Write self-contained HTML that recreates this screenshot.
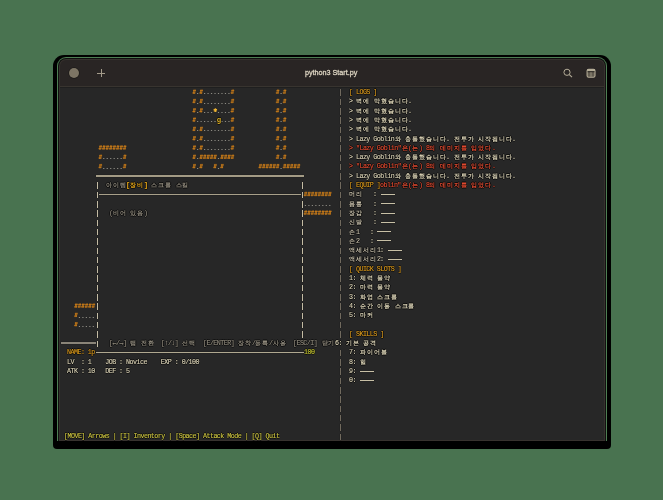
<!DOCTYPE html>
<html><head><meta charset="utf-8">
<style>
html,body{margin:0;padding:0;}
body{width:663px;height:500px;overflow:hidden;position:relative;background:#497350;font-family:"Liberation Mono",monospace;-webkit-font-smoothing:antialiased;}
#term{position:absolute;left:0;top:0;width:663px;height:500px;will-change:transform;}
#term span{text-shadow:0.8px 0 0.6px rgba(0,0,0,.7),-0.8px 0 0.6px rgba(0,0,0,.7),0 0.8px 0.6px rgba(0,0,0,.7),0 -0.8px 0.6px rgba(0,0,0,.7);}
.a{position:absolute;}
.t{position:absolute;white-space:pre;-webkit-text-stroke:0.15px currentColor;font-size:7.6px;line-height:9.3px;letter-spacing:-0.6089px;transform-origin:0 0;transform:scaleX(0.8800);}
.k{position:absolute;white-space:pre;font-weight:bold;font-size:6.4px;line-height:9.3px;width:6.954px;text-align:center;}
.l{position:absolute;box-shadow:0 0 1px rgba(0,0,0,.85);}
.g{position:absolute;white-space:pre;width:10px;text-align:center;line-height:12px;}
</style></head><body>
<div class="a" style="left:53px;top:55px;width:558px;height:394px;background:#000;border-radius:11px 11px 4px 4px;"></div>
<div class="a" style="left:57px;top:57px;width:550px;height:384px;background:#4e7e53;border-radius:9px 9px 0 0;"></div>
<div class="a" style="left:58px;top:58px;width:548px;height:383px;background:#101010;border-radius:8px 8px 0 0;"></div>
<div class="a" style="left:59px;top:59px;width:546px;height:382px;background:#37322e;border-radius:7px 7px 0 0;"></div>
<div class="a" style="left:60px;top:60px;width:544px;height:26px;background:#292524;border-radius:6px 6px 0 0;"></div>
<div class="a" style="left:60px;top:86px;width:544px;height:1px;background:#38342f;"></div>
<div class="a" style="left:60px;top:87px;width:544px;height:1px;background:#1f1f1f;"></div>
<div class="a" style="left:60px;top:88px;width:544px;height:352px;background:#272727;"></div>
<div class="a" style="left:68.8px;top:68px;width:10px;height:10px;border-radius:50%;background:#7d7565;box-shadow:0 0 0 0.7px #1c1a18;"></div>
<div class="a" style="left:97px;top:72.8px;width:8.4px;height:1px;background:#a39b8a;"></div>
<div class="a" style="left:100.7px;top:69px;width:1px;height:8.4px;background:#a39b8a;"></div>
<div class="a" style="left:0;top:64px;width:663px;text-align:center;font-family:'Liberation Sans',sans-serif;font-size:8px;line-height:18px;color:#ddd5c2;will-change:transform;-webkit-text-stroke:0.3px currentColor;"><span style="display:inline-block;transform:scaleX(0.9);">python3 Start.py</span></div>
<svg class="a" style="left:560px;top:65px" width="16" height="16" viewBox="0 0 16 16">
<circle cx="7" cy="7.3" r="3.1" fill="none" stroke="#b4ac98" stroke-width="1.0"/>
<line x1="9.3" y1="9.6" x2="12" y2="12.2" stroke="#b4ac98" stroke-width="1.1"/>
</svg>
<svg class="a" style="left:584px;top:66px" width="14" height="14" viewBox="0 0 14 14">
<rect x="3.1" y="3.3" width="7.9" height="8.0" rx="1.6" fill="#625c50" stroke="#b4ac96" stroke-width="1.1"/>
<rect x="3.0" y="3.0" width="8.1" height="2.4" rx="1" fill="#b4ac96"/>
<rect x="3.6" y="5.3" width="6.9" height="0.9" fill="#151312"/>
<rect x="6.55" y="6.2" width="0.9" height="4.6" fill="#9c947e"/>
</svg>
<div id="term">
<svg class="a" style="left:0;top:0" width="663" height="500"><path d="M193.03 90.60H196.00M192.33 92.90H195.30M193.33 93.90L194.03 89.50M194.53 93.90L195.23 89.50M199.98 90.60H202.96M199.28 92.90H202.26M200.28 93.90L200.98 89.50M201.48 93.90L202.18 89.50M231.27 90.60H234.25M230.57 92.90H233.55M231.57 93.90L232.27 89.50M232.77 93.90L233.47 89.50M193.03 99.90H196.00M192.33 102.20H195.30M193.33 103.20L194.03 98.80M194.53 103.20L195.23 98.80M199.98 99.90H202.96M199.28 102.20H202.26M200.28 103.20L200.98 98.80M201.48 103.20L202.18 98.80M231.27 99.90H234.25M230.57 102.20H233.55M231.57 103.20L232.27 98.80M232.77 103.20L233.47 98.80M193.03 109.20H196.00M192.33 111.50H195.30M193.33 112.50L194.03 108.10M194.53 112.50L195.23 108.10M199.98 109.20H202.96M199.28 111.50H202.26M200.28 112.50L200.98 108.10M201.48 112.50L202.18 108.10M231.27 109.20H234.25M230.57 111.50H233.55M231.57 112.50L232.27 108.10M232.77 112.50L233.47 108.10M193.03 118.50H196.00M192.33 120.80H195.30M193.33 121.80L194.03 117.40M194.53 121.80L195.23 117.40M231.27 118.50H234.25M230.57 120.80H233.55M231.57 121.80L232.27 117.40M232.77 121.80L233.47 117.40M193.03 127.80H196.00M192.33 130.10H195.30M193.33 131.10L194.03 126.70M194.53 131.10L195.23 126.70M199.98 127.80H202.96M199.28 130.10H202.26M200.28 131.10L200.98 126.70M201.48 131.10L202.18 126.70M231.27 127.80H234.25M230.57 130.10H233.55M231.57 131.10L232.27 126.70M232.77 131.10L233.47 126.70M193.03 137.10H196.00M192.33 139.40H195.30M193.33 140.40L194.03 136.00M194.53 140.40L195.23 136.00M199.98 137.10H202.96M199.28 139.40H202.26M200.28 140.40L200.98 136.00M201.48 140.40L202.18 136.00M231.27 137.10H234.25M230.57 139.40H233.55M231.57 140.40L232.27 136.00M232.77 140.40L233.47 136.00M193.03 146.40H196.00M192.33 148.70H195.30M193.33 149.70L194.03 145.30M194.53 149.70L195.23 145.30M199.98 146.40H202.96M199.28 148.70H202.26M200.28 149.70L200.98 145.30M201.48 149.70L202.18 145.30M231.27 146.40H234.25M230.57 148.70H233.55M231.57 149.70L232.27 145.30M232.77 149.70L233.47 145.30M193.03 155.70H196.00M192.33 158.00H195.30M193.33 159.00L194.03 154.60M194.53 159.00L195.23 154.60M199.98 155.70H202.96M199.28 158.00H202.26M200.28 159.00L200.98 154.60M201.48 159.00L202.18 154.60M203.46 155.70H206.43M202.76 158.00H205.73M203.76 159.00L204.46 154.60M204.96 159.00L205.66 154.60M206.93 155.70H209.91M206.23 158.00H209.21M207.23 159.00L207.93 154.60M208.43 159.00L209.13 154.60M210.41 155.70H213.39M209.71 158.00H212.69M210.71 159.00L211.41 154.60M211.91 159.00L212.61 154.60M213.89 155.70H216.87M213.19 158.00H216.17M214.19 159.00L214.89 154.60M215.39 159.00L216.09 154.60M220.84 155.70H223.82M220.14 158.00H223.12M221.14 159.00L221.84 154.60M222.34 159.00L223.04 154.60M224.32 155.70H227.30M223.62 158.00H226.60M224.62 159.00L225.32 154.60M225.82 159.00L226.52 154.60M227.80 155.70H230.77M227.10 158.00H230.07M228.10 159.00L228.80 154.60M229.30 159.00L230.00 154.60M231.27 155.70H234.25M230.57 158.00H233.55M231.57 159.00L232.27 154.60M232.77 159.00L233.47 154.60M193.03 165.00H196.00M192.33 167.30H195.30M193.33 168.30L194.03 163.90M194.53 168.30L195.23 163.90M199.98 165.00H202.96M199.28 167.30H202.26M200.28 168.30L200.98 163.90M201.48 168.30L202.18 163.90M213.89 165.00H216.87M213.19 167.30H216.17M214.19 168.30L214.89 163.90M215.39 168.30L216.09 163.90M220.84 165.00H223.82M220.14 167.30H223.12M221.14 168.30L221.84 163.90M222.34 168.30L223.04 163.90M276.47 90.60H279.45M275.77 92.90H278.75M276.77 93.90L277.47 89.50M277.97 93.90L278.67 89.50M283.43 90.60H286.40M282.73 92.90H285.70M283.73 93.90L284.43 89.50M284.93 93.90L285.63 89.50M276.47 99.90H279.45M275.77 102.20H278.75M276.77 103.20L277.47 98.80M277.97 103.20L278.67 98.80M283.43 99.90H286.40M282.73 102.20H285.70M283.73 103.20L284.43 98.80M284.93 103.20L285.63 98.80M276.47 109.20H279.45M275.77 111.50H278.75M276.77 112.50L277.47 108.10M277.97 112.50L278.67 108.10M283.43 109.20H286.40M282.73 111.50H285.70M283.73 112.50L284.43 108.10M284.93 112.50L285.63 108.10M276.47 118.50H279.45M275.77 120.80H278.75M276.77 121.80L277.47 117.40M277.97 121.80L278.67 117.40M283.43 118.50H286.40M282.73 120.80H285.70M283.73 121.80L284.43 117.40M284.93 121.80L285.63 117.40M276.47 127.80H279.45M275.77 130.10H278.75M276.77 131.10L277.47 126.70M277.97 131.10L278.67 126.70M283.43 127.80H286.40M282.73 130.10H285.70M283.73 131.10L284.43 126.70M284.93 131.10L285.63 126.70M276.47 137.10H279.45M275.77 139.40H278.75M276.77 140.40L277.47 136.00M277.97 140.40L278.67 136.00M283.43 137.10H286.40M282.73 139.40H285.70M283.73 140.40L284.43 136.00M284.93 140.40L285.63 136.00M276.47 146.40H279.45M275.77 148.70H278.75M276.77 149.70L277.47 145.30M277.97 149.70L278.67 145.30M283.43 146.40H286.40M282.73 148.70H285.70M283.73 149.70L284.43 145.30M284.93 149.70L285.63 145.30M276.47 155.70H279.45M275.77 158.00H278.75M276.77 159.00L277.47 154.60M277.97 159.00L278.67 154.60M283.43 155.70H286.40M282.73 158.00H285.70M283.73 159.00L284.43 154.60M284.93 159.00L285.63 154.60M259.09 165.00H262.07M258.39 167.30H261.37M259.39 168.30L260.09 163.90M260.59 168.30L261.29 163.90M262.57 165.00H265.54M261.87 167.30H264.84M262.87 168.30L263.57 163.90M264.07 168.30L264.77 163.90M266.04 165.00H269.02M265.34 167.30H268.32M266.34 168.30L267.04 163.90M267.54 168.30L268.24 163.90M269.52 165.00H272.50M268.82 167.30H271.80M269.82 168.30L270.52 163.90M271.02 168.30L271.72 163.90M273.00 165.00H275.97M272.30 167.30H275.27M273.30 168.30L274.00 163.90M274.50 168.30L275.20 163.90M276.47 165.00H279.45M275.77 167.30H278.75M276.77 168.30L277.47 163.90M277.97 168.30L278.67 163.90M283.43 165.00H286.40M282.73 167.30H285.70M283.73 168.30L284.43 163.90M284.93 168.30L285.63 163.90M286.91 165.00H289.88M286.20 167.30H289.18M287.20 168.30L287.91 163.90M288.41 168.30L289.11 163.90M290.38 165.00H293.36M289.68 167.30H292.66M290.68 168.30L291.38 163.90M291.88 168.30L292.58 163.90M293.86 165.00H296.84M293.16 167.30H296.14M294.16 168.30L294.86 163.90M295.36 168.30L296.06 163.90M297.34 165.00H300.31M296.64 167.30H299.61M297.64 168.30L298.34 163.90M298.84 168.30L299.54 163.90M99.15 146.40H102.12M98.45 148.70H101.42M99.45 149.70L100.15 145.30M100.65 149.70L101.35 145.30M102.62 146.40H105.60M101.92 148.70H104.90M102.92 149.70L103.62 145.30M104.12 149.70L104.82 145.30M106.10 146.40H109.08M105.40 148.70H108.38M106.40 149.70L107.10 145.30M107.60 149.70L108.30 145.30M109.58 146.40H112.55M108.88 148.70H111.86M109.88 149.70L110.58 145.30M111.08 149.70L111.78 145.30M113.05 146.40H116.03M112.36 148.70H115.33M113.36 149.70L114.05 145.30M114.55 149.70L115.25 145.30M116.53 146.40H119.51M115.83 148.70H118.81M116.83 149.70L117.53 145.30M118.03 149.70L118.73 145.30M120.01 146.40H122.99M119.31 148.70H122.29M120.31 149.70L121.01 145.30M121.51 149.70L122.21 145.30M123.49 146.40H126.46M122.79 148.70H125.76M123.79 149.70L124.49 145.30M124.99 149.70L125.69 145.30M99.15 155.70H102.12M98.45 158.00H101.42M99.45 159.00L100.15 154.60M100.65 159.00L101.35 154.60M123.49 155.70H126.46M122.79 158.00H125.76M123.79 159.00L124.49 154.60M124.99 159.00L125.69 154.60M99.15 165.00H102.12M98.45 167.30H101.42M99.45 168.30L100.15 163.90M100.65 168.30L101.35 163.90M123.49 165.00H126.46M122.79 167.30H125.76M123.79 168.30L124.49 163.90M124.99 168.30L125.69 163.90M304.29 192.90H307.27M303.59 195.20H306.57M304.59 196.20L305.29 191.80M305.79 196.20L306.49 191.80M307.77 192.90H310.74M307.07 195.20H310.04M308.07 196.20L308.77 191.80M309.27 196.20L309.97 191.80M311.24 192.90H314.22M310.54 195.20H313.52M311.54 196.20L312.24 191.80M312.74 196.20L313.44 191.80M314.72 192.90H317.70M314.02 195.20H317.00M315.02 196.20L315.72 191.80M316.22 196.20L316.92 191.80M318.20 192.90H321.18M317.50 195.20H320.47M318.50 196.20L319.20 191.80M319.70 196.20L320.40 191.80M321.68 192.90H324.65M320.97 195.20H323.95M321.97 196.20L322.68 191.80M323.18 196.20L323.88 191.80M325.15 192.90H328.13M324.45 195.20H327.43M325.45 196.20L326.15 191.80M326.65 196.20L327.35 191.80M328.63 192.90H331.61M327.93 195.20H330.91M328.93 196.20L329.63 191.80M330.13 196.20L330.83 191.80M304.29 211.50H307.27M303.59 213.80H306.57M304.59 214.80L305.29 210.40M305.79 214.80L306.49 210.40M307.77 211.50H310.74M307.07 213.80H310.04M308.07 214.80L308.77 210.40M309.27 214.80L309.97 210.40M311.24 211.50H314.22M310.54 213.80H313.52M311.54 214.80L312.24 210.40M312.74 214.80L313.44 210.40M314.72 211.50H317.70M314.02 213.80H317.00M315.02 214.80L315.72 210.40M316.22 214.80L316.92 210.40M318.20 211.50H321.18M317.50 213.80H320.47M318.50 214.80L319.20 210.40M319.70 214.80L320.40 210.40M321.68 211.50H324.65M320.97 213.80H323.95M321.97 214.80L322.68 210.40M323.18 214.80L323.88 210.40M325.15 211.50H328.13M324.45 213.80H327.43M325.45 214.80L326.15 210.40M326.65 214.80L327.35 210.40M328.63 211.50H331.61M327.93 213.80H330.91M328.93 214.80L329.63 210.40M330.13 214.80L330.83 210.40M74.81 304.50H77.78M74.11 306.80H77.09M75.11 307.80L75.81 303.40M76.31 307.80L77.01 303.40M78.28 304.50H81.26M77.59 306.80H80.56M78.59 307.80L79.28 303.40M79.78 307.80L80.48 303.40M81.76 304.50H84.74M81.06 306.80H84.04M82.06 307.80L82.76 303.40M83.26 307.80L83.96 303.40M85.24 304.50H88.22M84.54 306.80H87.52M85.54 307.80L86.24 303.40M86.74 307.80L87.44 303.40M88.72 304.50H91.69M88.02 306.80H90.99M89.02 307.80L89.72 303.40M90.22 307.80L90.92 303.40M92.19 304.50H95.17M91.49 306.80H94.47M92.49 307.80L93.19 303.40M93.69 307.80L94.39 303.40M74.81 313.80H77.78M74.11 316.10H77.09M75.11 317.10L75.81 312.70M76.31 317.10L77.01 312.70M74.81 323.10H77.78M74.11 325.40H77.09M75.11 326.40L75.81 322.00M76.31 326.40L77.01 322.00" stroke="#cc7c18" stroke-width="0.8" fill="none"/><path d="M197.04 93h1.2v1.1h-1.2zM204.00 93h1.2v1.1h-1.2zM207.47 93h1.2v1.1h-1.2zM210.95 93h1.2v1.1h-1.2zM214.43 93h1.2v1.1h-1.2zM217.90 93h1.2v1.1h-1.2zM221.38 93h1.2v1.1h-1.2zM224.86 93h1.2v1.1h-1.2zM228.33 93h1.2v1.1h-1.2zM197.04 103h1.2v1.1h-1.2zM204.00 103h1.2v1.1h-1.2zM207.47 103h1.2v1.1h-1.2zM210.95 103h1.2v1.1h-1.2zM214.43 103h1.2v1.1h-1.2zM217.90 103h1.2v1.1h-1.2zM221.38 103h1.2v1.1h-1.2zM224.86 103h1.2v1.1h-1.2zM228.33 103h1.2v1.1h-1.2zM197.04 112h1.2v1.1h-1.2zM204.00 112h1.2v1.1h-1.2zM207.47 112h1.2v1.1h-1.2zM210.95 112h1.2v1.1h-1.2zM217.90 112h1.2v1.1h-1.2zM221.38 112h1.2v1.1h-1.2zM224.86 112h1.2v1.1h-1.2zM228.33 112h1.2v1.1h-1.2zM197.04 121h1.2v1.1h-1.2zM200.52 121h1.2v1.1h-1.2zM204.00 121h1.2v1.1h-1.2zM207.47 121h1.2v1.1h-1.2zM210.95 121h1.2v1.1h-1.2zM214.43 121h1.2v1.1h-1.2zM221.38 121h1.2v1.1h-1.2zM224.86 121h1.2v1.1h-1.2zM228.33 121h1.2v1.1h-1.2zM197.04 130h1.2v1.1h-1.2zM204.00 130h1.2v1.1h-1.2zM207.47 130h1.2v1.1h-1.2zM210.95 130h1.2v1.1h-1.2zM214.43 130h1.2v1.1h-1.2zM217.90 130h1.2v1.1h-1.2zM221.38 130h1.2v1.1h-1.2zM224.86 130h1.2v1.1h-1.2zM228.33 130h1.2v1.1h-1.2zM197.04 140h1.2v1.1h-1.2zM204.00 140h1.2v1.1h-1.2zM207.47 140h1.2v1.1h-1.2zM210.95 140h1.2v1.1h-1.2zM214.43 140h1.2v1.1h-1.2zM217.90 140h1.2v1.1h-1.2zM221.38 140h1.2v1.1h-1.2zM224.86 140h1.2v1.1h-1.2zM228.33 140h1.2v1.1h-1.2zM197.04 149h1.2v1.1h-1.2zM204.00 149h1.2v1.1h-1.2zM207.47 149h1.2v1.1h-1.2zM210.95 149h1.2v1.1h-1.2zM214.43 149h1.2v1.1h-1.2zM217.90 149h1.2v1.1h-1.2zM221.38 149h1.2v1.1h-1.2zM224.86 149h1.2v1.1h-1.2zM228.33 149h1.2v1.1h-1.2zM197.04 158h1.2v1.1h-1.2zM217.90 158h1.2v1.1h-1.2zM197.04 168h1.2v1.1h-1.2zM217.90 168h1.2v1.1h-1.2zM280.49 93h1.2v1.1h-1.2zM280.49 103h1.2v1.1h-1.2zM280.49 112h1.2v1.1h-1.2zM280.49 121h1.2v1.1h-1.2zM280.49 130h1.2v1.1h-1.2zM280.49 140h1.2v1.1h-1.2zM280.49 149h1.2v1.1h-1.2zM280.49 158h1.2v1.1h-1.2zM280.49 168h1.2v1.1h-1.2zM103.16 158h1.2v1.1h-1.2zM106.64 158h1.2v1.1h-1.2zM110.12 158h1.2v1.1h-1.2zM113.59 158h1.2v1.1h-1.2zM117.07 158h1.2v1.1h-1.2zM120.55 158h1.2v1.1h-1.2zM103.16 168h1.2v1.1h-1.2zM106.64 168h1.2v1.1h-1.2zM110.12 168h1.2v1.1h-1.2zM113.59 168h1.2v1.1h-1.2zM117.07 168h1.2v1.1h-1.2zM120.55 168h1.2v1.1h-1.2zM304.83 205h1.2v1.1h-1.2zM308.31 205h1.2v1.1h-1.2zM311.78 205h1.2v1.1h-1.2zM315.26 205h1.2v1.1h-1.2zM318.74 205h1.2v1.1h-1.2zM322.21 205h1.2v1.1h-1.2zM325.69 205h1.2v1.1h-1.2zM329.17 205h1.2v1.1h-1.2zM78.82 317h1.2v1.1h-1.2zM82.30 317h1.2v1.1h-1.2zM85.78 317h1.2v1.1h-1.2zM89.25 317h1.2v1.1h-1.2zM92.73 317h1.2v1.1h-1.2zM78.82 326h1.2v1.1h-1.2zM82.30 326h1.2v1.1h-1.2zM85.78 326h1.2v1.1h-1.2zM89.25 326h1.2v1.1h-1.2zM92.73 326h1.2v1.1h-1.2z" fill="#8c8a82"/><path d="M215.33 108.20L215.33 112.00M213.68 109.15L216.97 111.05M216.97 109.15L213.68 111.05" stroke="#f2b632" stroke-width="1.1" fill="none"/></svg>
<span class="g" style="left:213.80px;top:114.20px;color:#e8b828;font-size:8.0px;font-weight:bold;transform:scaleX(0.900);">g</span>
<div class="l" style="left:96px;top:175px;width:208px;height:1.8px;background:#a39b85"></div>
<div class="l" style="left:96.76px;top:182.40px;width:1.3px;height:6.6px;background:#c4bca4"></div>
<div class="l" style="left:96.76px;top:191.70px;width:1.3px;height:6.6px;background:#c4bca4"></div>
<div class="l" style="left:96.76px;top:201.00px;width:1.3px;height:6.6px;background:#c4bca4"></div>
<div class="l" style="left:96.76px;top:210.30px;width:1.3px;height:6.6px;background:#c4bca4"></div>
<div class="l" style="left:96.76px;top:219.60px;width:1.3px;height:6.6px;background:#c4bca4"></div>
<div class="l" style="left:96.76px;top:228.90px;width:1.3px;height:6.6px;background:#c4bca4"></div>
<div class="l" style="left:96.76px;top:238.20px;width:1.3px;height:6.6px;background:#c4bca4"></div>
<div class="l" style="left:96.76px;top:247.50px;width:1.3px;height:6.6px;background:#c4bca4"></div>
<div class="l" style="left:96.76px;top:256.80px;width:1.3px;height:6.6px;background:#c4bca4"></div>
<div class="l" style="left:96.76px;top:266.10px;width:1.3px;height:6.6px;background:#c4bca4"></div>
<div class="l" style="left:96.76px;top:275.40px;width:1.3px;height:6.6px;background:#c4bca4"></div>
<div class="l" style="left:96.76px;top:284.70px;width:1.3px;height:6.6px;background:#c4bca4"></div>
<div class="l" style="left:96.76px;top:294.00px;width:1.3px;height:6.6px;background:#c4bca4"></div>
<div class="l" style="left:96.76px;top:303.30px;width:1.3px;height:6.6px;background:#c4bca4"></div>
<div class="l" style="left:96.76px;top:312.60px;width:1.3px;height:6.6px;background:#c4bca4"></div>
<div class="l" style="left:96.76px;top:321.90px;width:1.3px;height:6.6px;background:#c4bca4"></div>
<div class="l" style="left:96.76px;top:331.20px;width:1.3px;height:6.6px;background:#c4bca4"></div>
<div class="l" style="left:96.76px;top:340.50px;width:1.3px;height:6.6px;background:#c4bca4"></div>
<div class="l" style="left:301.90px;top:182.40px;width:1.3px;height:6.6px;background:#c4bca4"></div>
<div class="l" style="left:301.90px;top:191.70px;width:1.3px;height:6.6px;background:#c4bca4"></div>
<div class="l" style="left:301.90px;top:201.00px;width:1.3px;height:6.6px;background:#c4bca4"></div>
<div class="l" style="left:301.90px;top:210.30px;width:1.3px;height:6.6px;background:#c4bca4"></div>
<div class="l" style="left:301.90px;top:219.60px;width:1.3px;height:6.6px;background:#c4bca4"></div>
<div class="l" style="left:301.90px;top:228.90px;width:1.3px;height:6.6px;background:#c4bca4"></div>
<div class="l" style="left:301.90px;top:238.20px;width:1.3px;height:6.6px;background:#c4bca4"></div>
<div class="l" style="left:301.90px;top:247.50px;width:1.3px;height:6.6px;background:#c4bca4"></div>
<div class="l" style="left:301.90px;top:256.80px;width:1.3px;height:6.6px;background:#c4bca4"></div>
<div class="l" style="left:301.90px;top:266.10px;width:1.3px;height:6.6px;background:#c4bca4"></div>
<div class="l" style="left:301.90px;top:275.40px;width:1.3px;height:6.6px;background:#c4bca4"></div>
<div class="l" style="left:301.90px;top:284.70px;width:1.3px;height:6.6px;background:#c4bca4"></div>
<div class="l" style="left:301.90px;top:294.00px;width:1.3px;height:6.6px;background:#c4bca4"></div>
<div class="l" style="left:301.90px;top:303.30px;width:1.3px;height:6.6px;background:#c4bca4"></div>
<div class="l" style="left:301.90px;top:312.60px;width:1.3px;height:6.6px;background:#c4bca4"></div>
<div class="l" style="left:301.90px;top:321.90px;width:1.3px;height:6.6px;background:#c4bca4"></div>
<div class="l" style="left:301.90px;top:331.20px;width:1.3px;height:6.6px;background:#c4bca4"></div>
<div class="l" style="left:99px;top:194px;width:202px;height:1.0px;background:#a8a08a"></div>
<span class="k" style="left:105.50px;top:181.05px;color:#8f897c;">아</span>
<span class="k" style="left:112.45px;top:181.05px;color:#8f897c;">이</span>
<span class="k" style="left:119.41px;top:181.05px;color:#8f897c;">템</span>
<span class="t" style="left:126.46px;top:181.05px;color:#e8a818;font-weight:bold;">[</span>
<span class="k" style="left:129.84px;top:181.05px;color:#e8a818;">장</span>
<span class="k" style="left:136.79px;top:181.05px;color:#e8a818;">비</span>
<span class="t" style="left:143.85px;top:181.05px;color:#e8a818;font-weight:bold;">]</span>
<span class="k" style="left:150.70px;top:181.05px;color:#8f897c;">스</span>
<span class="k" style="left:157.66px;top:181.05px;color:#8f897c;">크</span>
<span class="k" style="left:164.61px;top:181.05px;color:#8f897c;">롤</span>
<span class="t" style="left:171.66px;top:181.05px;color:#8f897c;"> </span>
<span class="k" style="left:175.04px;top:181.05px;color:#8f897c;">스</span>
<span class="k" style="left:182.00px;top:181.05px;color:#8f897c;">킬</span>
<span class="t" style="left:109.08px;top:208.95px;color:#8f897c;">(</span>
<span class="k" style="left:112.45px;top:208.95px;color:#8f897c;">비</span>
<span class="k" style="left:119.41px;top:208.95px;color:#8f897c;">어</span>
<span class="t" style="left:126.46px;top:208.95px;color:#8f897c;"> </span>
<span class="k" style="left:129.84px;top:208.95px;color:#8f897c;">있</span>
<span class="k" style="left:136.79px;top:208.95px;color:#8f897c;">음</span>
<span class="t" style="left:143.85px;top:208.95px;color:#8f897c;">)</span>
<div class="l" style="left:61px;top:342px;width:35px;height:1.8px;background:#8a8478"></div>
<span class="t" style="left:109.08px;top:339.15px;color:#8f897c;">[←/→] </span>
<span class="k" style="left:129.84px;top:339.15px;color:#8f897c;">탭</span>
<span class="t" style="left:136.89px;top:339.15px;color:#8f897c;"> </span>
<span class="k" style="left:140.27px;top:339.15px;color:#8f897c;">전</span>
<span class="k" style="left:147.22px;top:339.15px;color:#8f897c;">환</span>
<span class="t" style="left:154.28px;top:339.15px;color:#8f897c;">  [↑/↓] </span>
<span class="k" style="left:182.00px;top:339.15px;color:#8f897c;">선</span>
<span class="k" style="left:188.95px;top:339.15px;color:#8f897c;">택</span>
<span class="t" style="left:196.00px;top:339.15px;color:#8f897c;">  [E/ENTER] </span>
<span class="k" style="left:237.63px;top:339.15px;color:#8f897c;">장</span>
<span class="k" style="left:244.58px;top:339.15px;color:#8f897c;">착</span>
<span class="t" style="left:251.63px;top:339.15px;color:#8f897c;">/</span>
<span class="k" style="left:255.01px;top:339.15px;color:#8f897c;">등</span>
<span class="k" style="left:261.97px;top:339.15px;color:#8f897c;">록</span>
<span class="t" style="left:269.02px;top:339.15px;color:#8f897c;">/</span>
<span class="k" style="left:272.40px;top:339.15px;color:#8f897c;">사</span>
<span class="k" style="left:279.35px;top:339.15px;color:#8f897c;">용</span>
<span class="t" style="left:286.41px;top:339.15px;color:#8f897c;">  [ESC/I] </span>
<span class="k" style="left:321.07px;top:339.15px;color:#8f897c;">닫</span>
<span class="k" style="left:328.03px;top:339.15px;color:#8f897c;">기</span>
<span class="t" style="left:335.08px;top:339.15px;color:#d8d0b4;">6: </span>
<span class="k" style="left:345.41px;top:339.15px;color:#d8d0b4;">기</span>
<span class="k" style="left:352.37px;top:339.15px;color:#d8d0b4;">본</span>
<span class="t" style="left:359.42px;top:339.15px;color:#d8d0b4;"> </span>
<span class="k" style="left:362.80px;top:339.15px;color:#d8d0b4;">공</span>
<span class="k" style="left:369.75px;top:339.15px;color:#d8d0b4;">격</span>
<span class="t" style="left:67.35px;top:348.45px;color:#d8981c;">NAME: 1p</span>
<div class="l" style="left:96px;top:352px;width:208px;height:1.0px;background:#b0a890"></div>
<span class="t" style="left:303.79px;top:348.45px;color:#c0c030;">100</span>
<span class="t" style="left:67.35px;top:357.75px;color:#d8d0b4;">LV  : 1    JOB : Novice    EXP : 0/100</span>
<span class="t" style="left:67.35px;top:367.05px;color:#d8d0b4;">ATK : 10   DEF : 5</span>
<span class="t" style="left:63.88px;top:432.15px;color:#c8c040;">[MOVE] Arrows | [I] Inventory | [Space] Attack Mode | [Q] Quit</span>
<div class="l" style="left:340.15px;top:89.40px;width:1.3px;height:6.6px;background:#716a5e"></div>
<div class="l" style="left:340.15px;top:98.70px;width:1.3px;height:6.6px;background:#716a5e"></div>
<div class="l" style="left:340.15px;top:108.00px;width:1.3px;height:6.6px;background:#716a5e"></div>
<div class="l" style="left:340.15px;top:117.30px;width:1.3px;height:6.6px;background:#716a5e"></div>
<div class="l" style="left:340.15px;top:126.60px;width:1.3px;height:6.6px;background:#716a5e"></div>
<div class="l" style="left:340.15px;top:135.90px;width:1.3px;height:6.6px;background:#716a5e"></div>
<div class="l" style="left:340.15px;top:145.20px;width:1.3px;height:6.6px;background:#716a5e"></div>
<div class="l" style="left:340.15px;top:154.50px;width:1.3px;height:6.6px;background:#716a5e"></div>
<div class="l" style="left:340.15px;top:163.80px;width:1.3px;height:6.6px;background:#716a5e"></div>
<div class="l" style="left:340.15px;top:173.10px;width:1.3px;height:6.6px;background:#716a5e"></div>
<div class="l" style="left:340.15px;top:182.40px;width:1.3px;height:6.6px;background:#716a5e"></div>
<div class="l" style="left:340.15px;top:191.70px;width:1.3px;height:6.6px;background:#716a5e"></div>
<div class="l" style="left:340.15px;top:201.00px;width:1.3px;height:6.6px;background:#716a5e"></div>
<div class="l" style="left:340.15px;top:210.30px;width:1.3px;height:6.6px;background:#716a5e"></div>
<div class="l" style="left:340.15px;top:219.60px;width:1.3px;height:6.6px;background:#716a5e"></div>
<div class="l" style="left:340.15px;top:228.90px;width:1.3px;height:6.6px;background:#716a5e"></div>
<div class="l" style="left:340.15px;top:238.20px;width:1.3px;height:6.6px;background:#716a5e"></div>
<div class="l" style="left:340.15px;top:247.50px;width:1.3px;height:6.6px;background:#716a5e"></div>
<div class="l" style="left:340.15px;top:256.80px;width:1.3px;height:6.6px;background:#716a5e"></div>
<div class="l" style="left:340.15px;top:266.10px;width:1.3px;height:6.6px;background:#716a5e"></div>
<div class="l" style="left:340.15px;top:275.40px;width:1.3px;height:6.6px;background:#716a5e"></div>
<div class="l" style="left:340.15px;top:284.70px;width:1.3px;height:6.6px;background:#716a5e"></div>
<div class="l" style="left:340.15px;top:294.00px;width:1.3px;height:6.6px;background:#716a5e"></div>
<div class="l" style="left:340.15px;top:303.30px;width:1.3px;height:6.6px;background:#716a5e"></div>
<div class="l" style="left:340.15px;top:312.60px;width:1.3px;height:6.6px;background:#716a5e"></div>
<div class="l" style="left:340.15px;top:321.90px;width:1.3px;height:6.6px;background:#716a5e"></div>
<div class="l" style="left:340.15px;top:331.20px;width:1.3px;height:6.6px;background:#716a5e"></div>
<div class="l" style="left:340.15px;top:349.80px;width:1.3px;height:6.6px;background:#716a5e"></div>
<div class="l" style="left:340.15px;top:359.10px;width:1.3px;height:6.6px;background:#716a5e"></div>
<div class="l" style="left:340.15px;top:368.40px;width:1.3px;height:6.6px;background:#716a5e"></div>
<div class="l" style="left:340.15px;top:377.70px;width:1.3px;height:6.6px;background:#716a5e"></div>
<div class="l" style="left:340.15px;top:387.00px;width:1.3px;height:6.6px;background:#716a5e"></div>
<div class="l" style="left:340.15px;top:396.30px;width:1.3px;height:6.6px;background:#716a5e"></div>
<div class="l" style="left:340.15px;top:405.60px;width:1.3px;height:6.6px;background:#716a5e"></div>
<div class="l" style="left:340.15px;top:414.90px;width:1.3px;height:6.6px;background:#716a5e"></div>
<div class="l" style="left:340.15px;top:424.20px;width:1.3px;height:6.6px;background:#716a5e"></div>
<div class="l" style="left:340.15px;top:433.50px;width:1.3px;height:6.6px;background:#716a5e"></div>
<span class="t" style="left:348.99px;top:88.05px;color:#d8981c;">[ LOGS ]</span>
<span class="t" style="left:348.99px;top:97.35px;color:#d8d0b4;">&gt; </span>
<span class="k" style="left:355.85px;top:97.35px;color:#d8d0b4;">벽</span>
<span class="k" style="left:362.80px;top:97.35px;color:#d8d0b4;">에</span>
<span class="t" style="left:369.85px;top:97.35px;color:#d8d0b4;"> </span>
<span class="k" style="left:373.23px;top:97.35px;color:#d8d0b4;">막</span>
<span class="k" style="left:380.18px;top:97.35px;color:#d8d0b4;">혔</span>
<span class="k" style="left:387.14px;top:97.35px;color:#d8d0b4;">습</span>
<span class="k" style="left:394.09px;top:97.35px;color:#d8d0b4;">니</span>
<span class="k" style="left:401.05px;top:97.35px;color:#d8d0b4;">다</span>
<span class="t" style="left:408.10px;top:97.35px;color:#d8d0b4;">.</span>
<span class="t" style="left:348.99px;top:106.65px;color:#d8d0b4;">&gt; </span>
<span class="k" style="left:355.85px;top:106.65px;color:#d8d0b4;">벽</span>
<span class="k" style="left:362.80px;top:106.65px;color:#d8d0b4;">에</span>
<span class="t" style="left:369.85px;top:106.65px;color:#d8d0b4;"> </span>
<span class="k" style="left:373.23px;top:106.65px;color:#d8d0b4;">막</span>
<span class="k" style="left:380.18px;top:106.65px;color:#d8d0b4;">혔</span>
<span class="k" style="left:387.14px;top:106.65px;color:#d8d0b4;">습</span>
<span class="k" style="left:394.09px;top:106.65px;color:#d8d0b4;">니</span>
<span class="k" style="left:401.05px;top:106.65px;color:#d8d0b4;">다</span>
<span class="t" style="left:408.10px;top:106.65px;color:#d8d0b4;">.</span>
<span class="t" style="left:348.99px;top:115.95px;color:#d8d0b4;">&gt; </span>
<span class="k" style="left:355.85px;top:115.95px;color:#d8d0b4;">벽</span>
<span class="k" style="left:362.80px;top:115.95px;color:#d8d0b4;">에</span>
<span class="t" style="left:369.85px;top:115.95px;color:#d8d0b4;"> </span>
<span class="k" style="left:373.23px;top:115.95px;color:#d8d0b4;">막</span>
<span class="k" style="left:380.18px;top:115.95px;color:#d8d0b4;">혔</span>
<span class="k" style="left:387.14px;top:115.95px;color:#d8d0b4;">습</span>
<span class="k" style="left:394.09px;top:115.95px;color:#d8d0b4;">니</span>
<span class="k" style="left:401.05px;top:115.95px;color:#d8d0b4;">다</span>
<span class="t" style="left:408.10px;top:115.95px;color:#d8d0b4;">.</span>
<span class="t" style="left:348.99px;top:125.25px;color:#d8d0b4;">&gt; </span>
<span class="k" style="left:355.85px;top:125.25px;color:#d8d0b4;">벽</span>
<span class="k" style="left:362.80px;top:125.25px;color:#d8d0b4;">에</span>
<span class="t" style="left:369.85px;top:125.25px;color:#d8d0b4;"> </span>
<span class="k" style="left:373.23px;top:125.25px;color:#d8d0b4;">막</span>
<span class="k" style="left:380.18px;top:125.25px;color:#d8d0b4;">혔</span>
<span class="k" style="left:387.14px;top:125.25px;color:#d8d0b4;">습</span>
<span class="k" style="left:394.09px;top:125.25px;color:#d8d0b4;">니</span>
<span class="k" style="left:401.05px;top:125.25px;color:#d8d0b4;">다</span>
<span class="t" style="left:408.10px;top:125.25px;color:#d8d0b4;">.</span>
<span class="t" style="left:348.99px;top:134.55px;color:#d8d0b4;">&gt; Lazy Goblin</span>
<span class="k" style="left:394.09px;top:134.55px;color:#d8d0b4;">와</span>
<span class="t" style="left:401.15px;top:134.55px;color:#d8d0b4;"> </span>
<span class="k" style="left:404.52px;top:134.55px;color:#d8d0b4;">충</span>
<span class="k" style="left:411.48px;top:134.55px;color:#d8d0b4;">돌</span>
<span class="k" style="left:418.43px;top:134.55px;color:#d8d0b4;">했</span>
<span class="k" style="left:425.38px;top:134.55px;color:#d8d0b4;">습</span>
<span class="k" style="left:432.34px;top:134.55px;color:#d8d0b4;">니</span>
<span class="k" style="left:439.29px;top:134.55px;color:#d8d0b4;">다</span>
<span class="t" style="left:446.35px;top:134.55px;color:#d8d0b4;">. </span>
<span class="k" style="left:453.20px;top:134.55px;color:#d8d0b4;">전</span>
<span class="k" style="left:460.15px;top:134.55px;color:#d8d0b4;">투</span>
<span class="k" style="left:467.11px;top:134.55px;color:#d8d0b4;">가</span>
<span class="t" style="left:474.16px;top:134.55px;color:#d8d0b4;"> </span>
<span class="k" style="left:477.54px;top:134.55px;color:#d8d0b4;">시</span>
<span class="k" style="left:484.49px;top:134.55px;color:#d8d0b4;">작</span>
<span class="k" style="left:491.45px;top:134.55px;color:#d8d0b4;">됩</span>
<span class="k" style="left:498.40px;top:134.55px;color:#d8d0b4;">니</span>
<span class="k" style="left:505.36px;top:134.55px;color:#d8d0b4;">다</span>
<span class="t" style="left:512.41px;top:134.55px;color:#d8d0b4;">.</span>
<span class="t" style="left:348.99px;top:153.15px;color:#d8d0b4;">&gt; Lazy Goblin</span>
<span class="k" style="left:394.09px;top:153.15px;color:#d8d0b4;">와</span>
<span class="t" style="left:401.15px;top:153.15px;color:#d8d0b4;"> </span>
<span class="k" style="left:404.52px;top:153.15px;color:#d8d0b4;">충</span>
<span class="k" style="left:411.48px;top:153.15px;color:#d8d0b4;">돌</span>
<span class="k" style="left:418.43px;top:153.15px;color:#d8d0b4;">했</span>
<span class="k" style="left:425.38px;top:153.15px;color:#d8d0b4;">습</span>
<span class="k" style="left:432.34px;top:153.15px;color:#d8d0b4;">니</span>
<span class="k" style="left:439.29px;top:153.15px;color:#d8d0b4;">다</span>
<span class="t" style="left:446.35px;top:153.15px;color:#d8d0b4;">. </span>
<span class="k" style="left:453.20px;top:153.15px;color:#d8d0b4;">전</span>
<span class="k" style="left:460.15px;top:153.15px;color:#d8d0b4;">투</span>
<span class="k" style="left:467.11px;top:153.15px;color:#d8d0b4;">가</span>
<span class="t" style="left:474.16px;top:153.15px;color:#d8d0b4;"> </span>
<span class="k" style="left:477.54px;top:153.15px;color:#d8d0b4;">시</span>
<span class="k" style="left:484.49px;top:153.15px;color:#d8d0b4;">작</span>
<span class="k" style="left:491.45px;top:153.15px;color:#d8d0b4;">됩</span>
<span class="k" style="left:498.40px;top:153.15px;color:#d8d0b4;">니</span>
<span class="k" style="left:505.36px;top:153.15px;color:#d8d0b4;">다</span>
<span class="t" style="left:512.41px;top:153.15px;color:#d8d0b4;">.</span>
<span class="t" style="left:348.99px;top:171.75px;color:#d8d0b4;">&gt; Lazy Goblin</span>
<span class="k" style="left:394.09px;top:171.75px;color:#d8d0b4;">와</span>
<span class="t" style="left:401.15px;top:171.75px;color:#d8d0b4;"> </span>
<span class="k" style="left:404.52px;top:171.75px;color:#d8d0b4;">충</span>
<span class="k" style="left:411.48px;top:171.75px;color:#d8d0b4;">돌</span>
<span class="k" style="left:418.43px;top:171.75px;color:#d8d0b4;">했</span>
<span class="k" style="left:425.38px;top:171.75px;color:#d8d0b4;">습</span>
<span class="k" style="left:432.34px;top:171.75px;color:#d8d0b4;">니</span>
<span class="k" style="left:439.29px;top:171.75px;color:#d8d0b4;">다</span>
<span class="t" style="left:446.35px;top:171.75px;color:#d8d0b4;">. </span>
<span class="k" style="left:453.20px;top:171.75px;color:#d8d0b4;">전</span>
<span class="k" style="left:460.15px;top:171.75px;color:#d8d0b4;">투</span>
<span class="k" style="left:467.11px;top:171.75px;color:#d8d0b4;">가</span>
<span class="t" style="left:474.16px;top:171.75px;color:#d8d0b4;"> </span>
<span class="k" style="left:477.54px;top:171.75px;color:#d8d0b4;">시</span>
<span class="k" style="left:484.49px;top:171.75px;color:#d8d0b4;">작</span>
<span class="k" style="left:491.45px;top:171.75px;color:#d8d0b4;">됩</span>
<span class="k" style="left:498.40px;top:171.75px;color:#d8d0b4;">니</span>
<span class="k" style="left:505.36px;top:171.75px;color:#d8d0b4;">다</span>
<span class="t" style="left:512.41px;top:171.75px;color:#d8d0b4;">.</span>
<span class="t" style="left:348.99px;top:143.85px;color:#e04a30;">&gt; &quot;Lazy Goblin&quot;</span>
<span class="k" style="left:401.05px;top:143.85px;color:#e04a30;">은</span>
<span class="t" style="left:408.10px;top:143.85px;color:#e04a30;">(</span>
<span class="k" style="left:411.48px;top:143.85px;color:#e04a30;">는</span>
<span class="t" style="left:418.53px;top:143.85px;color:#e04a30;">) 8</span>
<span class="k" style="left:428.86px;top:143.85px;color:#e04a30;">의</span>
<span class="t" style="left:435.92px;top:143.85px;color:#e04a30;"> </span>
<span class="k" style="left:439.29px;top:143.85px;color:#e04a30;">데</span>
<span class="k" style="left:446.25px;top:143.85px;color:#e04a30;">미</span>
<span class="k" style="left:453.20px;top:143.85px;color:#e04a30;">지</span>
<span class="k" style="left:460.15px;top:143.85px;color:#e04a30;">를</span>
<span class="t" style="left:467.21px;top:143.85px;color:#e04a30;"> </span>
<span class="k" style="left:470.59px;top:143.85px;color:#e04a30;">입</span>
<span class="k" style="left:477.54px;top:143.85px;color:#e04a30;">었</span>
<span class="k" style="left:484.49px;top:143.85px;color:#e04a30;">다</span>
<span class="t" style="left:491.55px;top:143.85px;color:#e04a30;">.</span>
<span class="t" style="left:348.99px;top:162.45px;color:#e04a30;">&gt; &quot;Lazy Goblin&quot;</span>
<span class="k" style="left:401.05px;top:162.45px;color:#e04a30;">은</span>
<span class="t" style="left:408.10px;top:162.45px;color:#e04a30;">(</span>
<span class="k" style="left:411.48px;top:162.45px;color:#e04a30;">는</span>
<span class="t" style="left:418.53px;top:162.45px;color:#e04a30;">) 8</span>
<span class="k" style="left:428.86px;top:162.45px;color:#e04a30;">의</span>
<span class="t" style="left:435.92px;top:162.45px;color:#e04a30;"> </span>
<span class="k" style="left:439.29px;top:162.45px;color:#e04a30;">데</span>
<span class="k" style="left:446.25px;top:162.45px;color:#e04a30;">미</span>
<span class="k" style="left:453.20px;top:162.45px;color:#e04a30;">지</span>
<span class="k" style="left:460.15px;top:162.45px;color:#e04a30;">를</span>
<span class="t" style="left:467.21px;top:162.45px;color:#e04a30;"> </span>
<span class="k" style="left:470.59px;top:162.45px;color:#e04a30;">입</span>
<span class="k" style="left:477.54px;top:162.45px;color:#e04a30;">었</span>
<span class="k" style="left:484.49px;top:162.45px;color:#e04a30;">다</span>
<span class="t" style="left:491.55px;top:162.45px;color:#e04a30;">.</span>
<span class="t" style="left:348.99px;top:181.05px;color:#d8981c;">[ EQUIP ]</span>
<span class="t" style="left:380.28px;top:181.05px;color:#e04a30;">oblin&quot;</span>
<span class="k" style="left:401.05px;top:181.05px;color:#e04a30;">은</span>
<span class="t" style="left:408.10px;top:181.05px;color:#e04a30;">(</span>
<span class="k" style="left:411.48px;top:181.05px;color:#e04a30;">는</span>
<span class="t" style="left:418.53px;top:181.05px;color:#e04a30;">) 8</span>
<span class="k" style="left:428.86px;top:181.05px;color:#e04a30;">의</span>
<span class="t" style="left:435.92px;top:181.05px;color:#e04a30;"> </span>
<span class="k" style="left:439.29px;top:181.05px;color:#e04a30;">데</span>
<span class="k" style="left:446.25px;top:181.05px;color:#e04a30;">미</span>
<span class="k" style="left:453.20px;top:181.05px;color:#e04a30;">지</span>
<span class="k" style="left:460.15px;top:181.05px;color:#e04a30;">를</span>
<span class="t" style="left:467.21px;top:181.05px;color:#e04a30;"> </span>
<span class="k" style="left:470.59px;top:181.05px;color:#e04a30;">입</span>
<span class="k" style="left:477.54px;top:181.05px;color:#e04a30;">었</span>
<span class="k" style="left:484.49px;top:181.05px;color:#e04a30;">다</span>
<span class="t" style="left:491.55px;top:181.05px;color:#e04a30;">.</span>
<span class="k" style="left:348.89px;top:190.35px;color:#c2baa6;">머</span>
<span class="k" style="left:355.85px;top:190.35px;color:#c2baa6;">리</span>
<span class="t" style="left:373.33px;top:190.35px;color:#d8d0b4;">:</span>
<div class="l" style="left:381px;top:194px;width:14px;height:1.3px;background:#c8c0a6"></div>
<span class="k" style="left:348.89px;top:199.65px;color:#c2baa6;">몸</span>
<span class="k" style="left:355.85px;top:199.65px;color:#c2baa6;">통</span>
<span class="t" style="left:373.33px;top:199.65px;color:#d8d0b4;">:</span>
<div class="l" style="left:381px;top:203px;width:14px;height:1.3px;background:#c8c0a6"></div>
<span class="k" style="left:348.89px;top:208.95px;color:#c2baa6;">장</span>
<span class="k" style="left:355.85px;top:208.95px;color:#c2baa6;">갑</span>
<span class="t" style="left:373.33px;top:208.95px;color:#d8d0b4;">:</span>
<div class="l" style="left:381px;top:213px;width:14px;height:1.3px;background:#c8c0a6"></div>
<span class="k" style="left:348.89px;top:218.25px;color:#c2baa6;">신</span>
<span class="k" style="left:355.85px;top:218.25px;color:#c2baa6;">발</span>
<span class="t" style="left:373.33px;top:218.25px;color:#d8d0b4;">:</span>
<div class="l" style="left:381px;top:222px;width:14px;height:1.3px;background:#c8c0a6"></div>
<span class="k" style="left:348.89px;top:227.55px;color:#c2baa6;">손</span>
<span class="t" style="left:355.95px;top:227.55px;color:#c2baa6;">1</span>
<span class="t" style="left:369.85px;top:227.55px;color:#d8d0b4;">:</span>
<div class="l" style="left:377px;top:231px;width:14px;height:1.3px;background:#c8c0a6"></div>
<span class="k" style="left:348.89px;top:236.85px;color:#c2baa6;">손</span>
<span class="t" style="left:355.95px;top:236.85px;color:#c2baa6;">2</span>
<span class="t" style="left:369.85px;top:236.85px;color:#d8d0b4;">:</span>
<div class="l" style="left:377px;top:240px;width:14px;height:1.3px;background:#c8c0a6"></div>
<span class="k" style="left:348.89px;top:246.15px;color:#c2baa6;">액</span>
<span class="k" style="left:355.85px;top:246.15px;color:#c2baa6;">세</span>
<span class="k" style="left:362.80px;top:246.15px;color:#c2baa6;">서</span>
<span class="k" style="left:369.75px;top:246.15px;color:#c2baa6;">리</span>
<span class="t" style="left:376.81px;top:246.15px;color:#c2baa6;">1</span>
<span class="t" style="left:380.28px;top:246.15px;color:#d8d0b4;">:</span>
<div class="l" style="left:388px;top:250px;width:14px;height:1.3px;background:#c8c0a6"></div>
<span class="k" style="left:348.89px;top:255.45px;color:#c2baa6;">액</span>
<span class="k" style="left:355.85px;top:255.45px;color:#c2baa6;">세</span>
<span class="k" style="left:362.80px;top:255.45px;color:#c2baa6;">서</span>
<span class="k" style="left:369.75px;top:255.45px;color:#c2baa6;">리</span>
<span class="t" style="left:376.81px;top:255.45px;color:#c2baa6;">2</span>
<span class="t" style="left:380.28px;top:255.45px;color:#d8d0b4;">:</span>
<div class="l" style="left:388px;top:259px;width:14px;height:1.3px;background:#c8c0a6"></div>
<span class="t" style="left:348.99px;top:264.75px;color:#d8981c;">[ QUICK SLOTS ]</span>
<span class="t" style="left:348.99px;top:274.05px;color:#d8d0b4;">1: </span>
<span class="k" style="left:359.32px;top:274.05px;color:#d8d0b4;">체</span>
<span class="k" style="left:366.28px;top:274.05px;color:#d8d0b4;">력</span>
<span class="t" style="left:373.33px;top:274.05px;color:#d8d0b4;"> </span>
<span class="k" style="left:376.71px;top:274.05px;color:#d8d0b4;">물</span>
<span class="k" style="left:383.66px;top:274.05px;color:#d8d0b4;">약</span>
<span class="t" style="left:348.99px;top:283.35px;color:#d8d0b4;">2: </span>
<span class="k" style="left:359.32px;top:283.35px;color:#d8d0b4;">마</span>
<span class="k" style="left:366.28px;top:283.35px;color:#d8d0b4;">력</span>
<span class="t" style="left:373.33px;top:283.35px;color:#d8d0b4;"> </span>
<span class="k" style="left:376.71px;top:283.35px;color:#d8d0b4;">물</span>
<span class="k" style="left:383.66px;top:283.35px;color:#d8d0b4;">약</span>
<span class="t" style="left:348.99px;top:292.65px;color:#d8d0b4;">3: </span>
<span class="k" style="left:359.32px;top:292.65px;color:#d8d0b4;">화</span>
<span class="k" style="left:366.28px;top:292.65px;color:#d8d0b4;">염</span>
<span class="t" style="left:373.33px;top:292.65px;color:#d8d0b4;"> </span>
<span class="k" style="left:376.71px;top:292.65px;color:#d8d0b4;">스</span>
<span class="k" style="left:383.66px;top:292.65px;color:#d8d0b4;">크</span>
<span class="k" style="left:390.62px;top:292.65px;color:#d8d0b4;">롤</span>
<span class="t" style="left:348.99px;top:301.95px;color:#d8d0b4;">4: </span>
<span class="k" style="left:359.32px;top:301.95px;color:#d8d0b4;">순</span>
<span class="k" style="left:366.28px;top:301.95px;color:#d8d0b4;">간</span>
<span class="t" style="left:373.33px;top:301.95px;color:#d8d0b4;"> </span>
<span class="k" style="left:376.71px;top:301.95px;color:#d8d0b4;">이</span>
<span class="k" style="left:383.66px;top:301.95px;color:#d8d0b4;">동</span>
<span class="t" style="left:390.72px;top:301.95px;color:#d8d0b4;"> </span>
<span class="k" style="left:394.09px;top:301.95px;color:#d8d0b4;">스</span>
<span class="k" style="left:401.05px;top:301.95px;color:#d8d0b4;">크</span>
<span class="k" style="left:408.00px;top:301.95px;color:#d8d0b4;">롤</span>
<span class="t" style="left:348.99px;top:311.25px;color:#d8d0b4;">5: </span>
<span class="k" style="left:359.32px;top:311.25px;color:#d8d0b4;">마</span>
<span class="k" style="left:366.28px;top:311.25px;color:#d8d0b4;">커</span>
<span class="t" style="left:348.99px;top:329.85px;color:#d8981c;">[ SKILLS ]</span>
<span class="t" style="left:348.99px;top:348.45px;color:#d8d0b4;">7: </span>
<span class="k" style="left:359.32px;top:348.45px;color:#d8d0b4;">파</span>
<span class="k" style="left:366.28px;top:348.45px;color:#d8d0b4;">이</span>
<span class="k" style="left:373.23px;top:348.45px;color:#d8d0b4;">어</span>
<span class="k" style="left:380.18px;top:348.45px;color:#d8d0b4;">볼</span>
<span class="t" style="left:348.99px;top:357.75px;color:#d8d0b4;">8: </span>
<span class="k" style="left:359.32px;top:357.75px;color:#d8d0b4;">힐</span>
<span class="t" style="left:348.99px;top:367.05px;color:#d8d0b4;">9:</span>
<div class="l" style="left:360px;top:371px;width:14px;height:1.3px;background:#c8c0a6"></div>
<span class="t" style="left:348.99px;top:376.35px;color:#d8d0b4;">0:</span>
<div class="l" style="left:360px;top:380px;width:14px;height:1.3px;background:#c8c0a6"></div>
</div>
</body></html>
